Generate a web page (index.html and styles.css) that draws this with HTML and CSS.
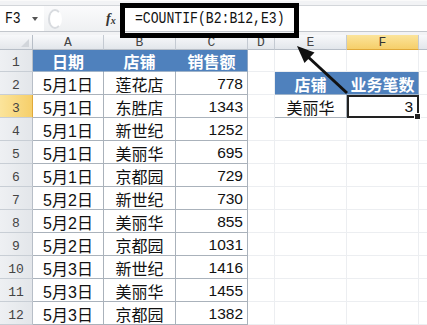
FILE: index.html
```html
<!DOCTYPE html>
<html lang="zh-CN">
<head>
<meta charset="utf-8">
<title>COUNTIF</title>
<link rel="stylesheet" href="styles.css">
</head>
<body>
<div class="app">
  <div class="fbar">
    <div class="frow">
      <div class="namebox"><span class="mono">F3</span><span class="dd"></span></div>
      <div class="gripzone"><span class="grip"></span></div>
      <div class="fx"><i>f</i><i class="x">x</i></div>
      <div class="formula"><span class="mono">=COUNTIF(B2:B12,E3)</span></div>
    </div>
  </div>
  <div class="sheet">
    <div class="corner"><span class="tri"></span></div>
    <div class="ch">A</div><div class="ch">B</div><div class="ch">C</div><div class="ch">D</div><div class="ch">E</div><div class="ch sel">F</div><div class="ch last"></div>

    <div class="rh">1</div>
    <div class="c hd">日期</div><div class="c hd">店铺</div><div class="c hd hdl">销售额</div>
    <div class="c e"></div><div class="c e"></div><div class="c e"></div><div class="c g"></div>

    <div class="rh">2</div>
    <div class="c t">5月1日</div><div class="c t">莲花店</div><div class="c t num">778</div>
    <div class="c e"></div><div class="c hd">店铺</div><div class="c hd hdl">业务笔数</div><div class="c g"></div>

    <div class="rh sel">3</div>
    <div class="c t">5月1日</div><div class="c t">东胜店</div><div class="c t num">1343</div>
    <div class="c e"></div><div class="c t">美丽华</div><div class="c t num active">3<span class="handle"></span></div><div class="c g"></div>

    <div class="rh">4</div>
    <div class="c t">5月1日</div><div class="c t">新世纪</div><div class="c t num">1252</div>
    <div class="c e"></div><div class="c e"></div><div class="c e"></div><div class="c g"></div>

    <div class="rh">5</div>
    <div class="c t">5月1日</div><div class="c t">美丽华</div><div class="c t num">695</div>
    <div class="c e"></div><div class="c e"></div><div class="c e"></div><div class="c g"></div>

    <div class="rh">6</div>
    <div class="c t">5月1日</div><div class="c t">京都园</div><div class="c t num">729</div>
    <div class="c e"></div><div class="c e"></div><div class="c e"></div><div class="c g"></div>

    <div class="rh">7</div>
    <div class="c t">5月2日</div><div class="c t">新世纪</div><div class="c t num">730</div>
    <div class="c e"></div><div class="c e"></div><div class="c e"></div><div class="c g"></div>

    <div class="rh">8</div>
    <div class="c t">5月2日</div><div class="c t">美丽华</div><div class="c t num">855</div>
    <div class="c e"></div><div class="c e"></div><div class="c e"></div><div class="c g"></div>

    <div class="rh">9</div>
    <div class="c t">5月2日</div><div class="c t">京都园</div><div class="c t num">1031</div>
    <div class="c e"></div><div class="c e"></div><div class="c e"></div><div class="c g"></div>

    <div class="rh">10</div>
    <div class="c t">5月3日</div><div class="c t">新世纪</div><div class="c t num">1416</div>
    <div class="c e"></div><div class="c e"></div><div class="c e"></div><div class="c g"></div>

    <div class="rh">11</div>
    <div class="c t">5月3日</div><div class="c t">美丽华</div><div class="c t num">1455</div>
    <div class="c e"></div><div class="c e"></div><div class="c e"></div><div class="c g"></div>

    <div class="rh">12</div>
    <div class="c t">5月3日</div><div class="c t">京都园</div><div class="c t num">1382</div>
    <div class="c e"></div><div class="c e"></div><div class="c e"></div><div class="c g"></div>
  </div>

  <div class="callout"></div>
  <svg class="arrow" width="427" height="325" viewBox="0 0 427 325">
    <line x1="347" y1="93" x2="306" y2="55" stroke="#111" stroke-width="3"/>
    <polygon points="297,46 314.5,52.5 304.5,63" fill="#111"/>
  </svg>
</div>
</body>
</html>
```

FILE: styles.css
```css
* { box-sizing: border-box; }
html, body { margin: 0; padding: 0; background: #fff; }
body { width: 427px; height: 325px; overflow: hidden; }

.app { position: relative; width: 427px; height: 325px; }

.mono {
  display: inline-block;
  font-family: "Liberation Mono", monospace;
  font-size: 16px;
  transform: scaleX(0.82);
  transform-origin: left center;
  color: #111;
  white-space: nowrap;
}

/* formula bar */
.fbar {
  height: 35px;
  padding-top: 4px;
  background: #f2f3f5;
  border-top: 1px solid #fafafa;
}
.frow {
  display: flex;
  height: 27px;
  background: #fff;
  border-top: 1px solid #d3d6da;
  border-bottom: 1px solid #c3c7cd;
}
.namebox {
  width: 44px;
  display: flex;
  align-items: center;
  padding-left: 5px;
  position: relative;
}
.dd {
  position: absolute;
  left: 32px;
  top: 11px;
  width: 0; height: 0;
  border-left: 3px solid transparent;
  border-right: 3px solid transparent;
  border-top: 4px solid #555;
}
.gripzone {
  width: 56px;
  display: flex;
  align-items: center;
  padding-left: 4px;
  background: linear-gradient(#fbfbfc, #eef0f2);
}
.grip {
  width: 14px; height: 20px;
  border-radius: 50%;
  border: 2px solid #d8dbdf;
  border-right-color: transparent;
  background: #fff;
}
.fx {
  width: 20px;
  display: flex;
  align-items: center;
  padding-left: 6px;
  font-family: "Liberation Serif", serif;
  font-size: 14px;
  font-weight: bold;
  color: #333;
  background: linear-gradient(#fbfbfc, #eef0f2);
}
.fx .x { font-size: 10px; margin-top: 4px; }
.formula {
  flex: 1;
  display: flex;
  align-items: center;
  padding-left: 15px;
  padding-top: 1px;
}

/* sheet grid */
.sheet {
  display: grid;
  grid-template-columns: 33px 71px 72px 72px 27px 72px 72px 1fr;
  grid-template-rows: 15px 22px repeat(11, 23px);
}
.corner {
  background: linear-gradient(#f7f8fa, #e4e7eb);
  border-right: 1px solid #b7bec7;
  border-bottom: 1px solid #b7bec7;
  position: relative;
}
.tri {
  position: absolute;
  right: 3px; bottom: 2px;
  width: 0; height: 0;
  border-left: 8px solid transparent;
  border-bottom: 8px solid #d2d6db;
}
.ch {
  background: linear-gradient(#f8f9fb, #e2e6eb);
  border-right: 1px solid #c4cad2;
  border-bottom: 1px solid #b7bec7;
  font-family: "Liberation Mono", monospace;
  font-size: 13px;
  color: #444;
  display: flex;
  align-items: center;
  justify-content: center;
  padding-top: 1px;
}
.ch.sel {
  background: linear-gradient(#fbe49b, #f6cf6a);
  border-bottom-color: #e0a93a;
  color: #333;
}
.ch.last { border-right: none; }
.rh {
  background: linear-gradient(90deg, #eef0f3, #e3e6ea);
  border-right: 1px solid #b7bec7;
  border-bottom: 1px solid #c8ced5;
  font-family: "Liberation Mono", monospace;
  font-size: 13px;
  color: #444;
  display: flex;
  align-items: center;
  justify-content: center;
  padding-top: 4px;
}
.rh.sel {
  background: linear-gradient(90deg, #fbe49b, #f6cf6a);
  border-right-color: #e0a93a;
}

.c {
  font-family: "Liberation Sans", "Noto Sans CJK SC", sans-serif;
  font-size: 16px;
  color: #111;
  display: flex;
  align-items: center;
  justify-content: center;
  padding-top: 1px;
  white-space: nowrap;
}
.c.t {
  border-right: 1px solid #aab2bb;
  border-bottom: 1px solid #aab2bb;
}
.c.num { justify-content: flex-end; padding-right: 4px; font-size: 15.5px; }
.c.hd {
  background: #4f81bd;
  color: #fff;
  font-weight: bold;
  border-right: 1px solid #4f81bd;
  border-bottom: 1px solid #9fb3c9;
}
.c.hd.hdl { border-right-color: #8ea6c4; }
.c.e {
  border-right: 1px solid #eceef1;
  border-bottom: 1px solid #eceef1;
}
.c.g { border-bottom: 1px solid #eceef1; }
.c.active {
  position: relative;
  outline: 2px solid #222;
  outline-offset: -2px;
  padding-right: 5px;
}
.handle {
  position: absolute;
  right: -3px; bottom: -3px;
  width: 5px; height: 5px;
  background: #222;
  border: 1px solid #fff;
  box-sizing: content-box;
}

/* annotation overlays */
.callout {
  position: absolute;
  left: 120px; top: 3px;
  width: 179px; height: 35px;
  border: 5px solid #000;
}
.arrow {
  position: absolute;
  left: 0; top: 0;
  pointer-events: none;
}
```
